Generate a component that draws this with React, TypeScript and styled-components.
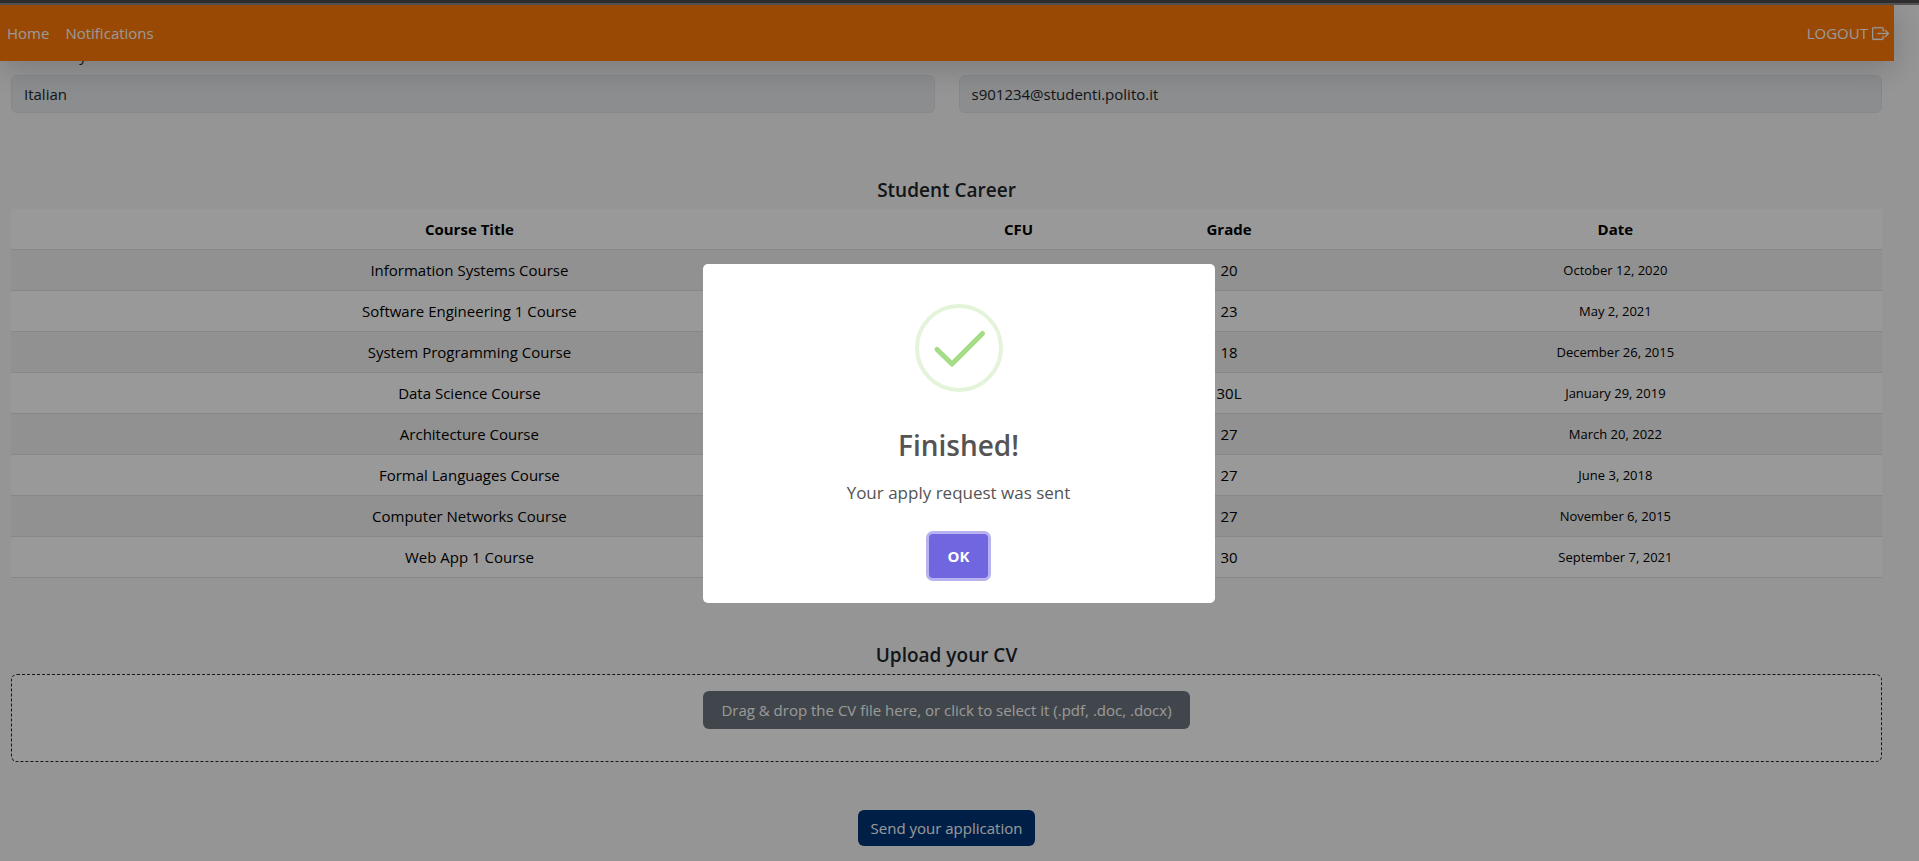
import React, { useState } from "react";
import styled, { createGlobalStyle } from "styled-components";
import { BsBoxArrowRight } from "react-icons/bs";

const GlobalStyle = createGlobalStyle`
  *, *::before, *::after { box-sizing: border-box; }
  body {
    margin: 0;
    background: #f9f9f9;
    color: #212529;
    font-family: "Open Sans", "Noto Sans", sans-serif;
    font-size: 15px;
    line-height: 24px;
  }
  button, input { font: inherit; }
`;

const TopStrip = styled.div`
  height: 5px;
  background: #4e4e4e;
  border-bottom: 2px solid #8c8c8c;
`;

const Page = styled.div`
  padding-right: 25px;
`;

const Navbar = styled.nav`
  position: sticky;
  top: 0;
  z-index: 10;
  display: flex;
  align-items: center;
  justify-content: space-between;
  height: 56px;
  padding: 0 5px 0 7px;
  background: #ff7a06;
  box-shadow: 0 8px 32px rgba(0, 0, 0, 0.18);
`;

const NavLinks = styled.div`
  display: flex;
  gap: 16px;
`;

const NavLink = styled.a`
  display: inline-flex;
  align-items: center;
  gap: 4px;
  color: #fff;
  text-decoration: none;

  svg {
    width: 17px;
    height: 17px;
    stroke: currentColor;
    stroke-width: 0.3;
  }
`;

const Main = styled.main`
  margin-top: -18px;
  padding: 0 12px 0 11px;
`;

const FieldRow = styled.div`
  display: grid;
  grid-template-columns: 1fr 1fr;
  gap: 24px;
`;

const Field = styled.div`
  display: flex;
  flex-direction: column;
  gap: 8px;
`;

const TextInput = styled.input`
  width: 100%;
  height: 38px;
  padding: 0 12px;
  border: 1px solid #dfe3e8;
  border-radius: 6px;
  background: #e9ecef;
  color: #212529;
`;

const Section = styled.section`
  display: flex;
  flex-direction: column;
  gap: 7px;
  margin-top: 65px;
`;

const SectionTitle = styled.h5`
  margin: 0;
  font-size: 19px;
  font-weight: 600;
  line-height: 24px;
  text-align: center;
`;

const CareerTable = styled.table`
  width: 100%;
  border-collapse: separate;
  border-spacing: 0;
  table-layout: fixed;
  background: #fff;
  color: #000;
  text-align: center;

  tbody tr:nth-child(odd) {
    background: #f2f2f2;
  }
`;

const HeadCell = styled.th<{ $width: number }>`
  width: ${({ $width }) => $width}%;
  height: 41px;
  padding: 0 8px;
  border-bottom: 1px solid #dee2e6;
  font-weight: 700;
`;

const Cell = styled.td`
  height: 41px;
  padding: 0 8px;
  border-bottom: 1px solid #dee2e6;
`;

const DateCell = styled(Cell)`
  font-size: 13px;
`;

const DropZone = styled.div`
  display: flex;
  align-items: flex-start;
  justify-content: center;
  min-height: 88px;
  padding: 16px;
  border: 1px dashed #212529;
  border-radius: 6px;
  background: #fff;
`;

const Button = styled.button<{ $color: string }>`
  min-height: 36px;
  padding: 6px 13px;
  border: 0;
  border-radius: 6px;
  background: ${({ $color }) => $color};
  color: #fff;
  cursor: pointer;
`;

const DropButton = styled(Button)`
  min-height: 38px;
  padding: 6px 18px;
`;

const SubmitRow = styled.div`
  display: flex;
  justify-content: center;
  padding: 48px 0 14px;
`;

const Overlay = styled.div`
  position: fixed;
  inset: 0;
  z-index: 20;
  display: flex;
  align-items: center;
  justify-content: center;
  padding: 6px 2px 0 0;
  background: rgba(0, 0, 0, 0.4);
`;

const Dialog = styled.div`
  display: flex;
  flex-direction: column;
  align-items: center;
  width: 512px;
  padding: 40px 20px 25px;
  border-radius: 5px;
  background: #fff;
  color: #545454;
`;

const DialogTitle = styled.h2`
  margin: 31px 0 12px;
  font-size: 28px;
  font-weight: 600;
  line-height: 44px;
`;

const DialogText = styled.p`
  margin: 0;
  font-size: 17px;
  line-height: 28px;
`;

const OkButton = styled.button`
  height: 44px;
  margin-top: 27px;
  padding: 0 19px;
  border: 0;
  border-radius: 4px;
  outline: none;
  background: #7066e0;
  box-shadow: 0 0 0 3px #b8b3f0;
  color: #fff;
  font-weight: 700;
  cursor: pointer;
`;

const courses = [
  { title: "Information Systems Course", grade: "20", date: "October 12, 2020" },
  { title: "Software Engineering 1 Course", grade: "23", date: "May 2, 2021" },
  { title: "System Programming Course", grade: "18", date: "December 26, 2015" },
  { title: "Data Science Course", grade: "30L", date: "January 29, 2019" },
  { title: "Architecture Course", grade: "27", date: "March 20, 2022" },
  { title: "Formal Languages Course", grade: "27", date: "June 3, 2018" },
  { title: "Computer Networks Course", grade: "27", date: "November 6, 2015" },
  { title: "Web App 1 Course", grade: "30", date: "September 7, 2021" },
];

function SuccessIcon() {
  return (
    <svg width="88" height="88" viewBox="0 0 88 88" fill="none" aria-hidden="true">
      <circle cx="44" cy="44" r="42" stroke="#e4f4da" strokeWidth="4" />
      <path
        d="M22 45.5 L37 60 L67.5 29.5"
        stroke="#a5dc86"
        strokeWidth="5"
        strokeLinecap="round"
        strokeLinejoin="round"
      />
    </svg>
  );
}

export default function App() {
  const [finished, setFinished] = useState(true);

  return (
    <>
      <GlobalStyle />
      <TopStrip />
      <Page>
        <Navbar>
          <NavLinks>
            <NavLink href="#home">Home</NavLink>
            <NavLink href="#notifications">Notifications</NavLink>
          </NavLinks>
          <NavLink href="#logout">
            LOGOUT <BsBoxArrowRight />
          </NavLink>
        </Navbar>
        <Main>
          <FieldRow>
            <Field>
              <label htmlFor="nationality">Nationality</label>
              <TextInput id="nationality" readOnly value="Italian" />
            </Field>
            <Field>
              <label htmlFor="email">Email</label>
              <TextInput id="email" readOnly value="s901234@studenti.polito.it" />
            </Field>
          </FieldRow>

          <Section>
            <SectionTitle>Student Career</SectionTitle>
            <CareerTable>
              <thead>
                <tr>
                  <HeadCell $width={49}>Course Title</HeadCell>
                  <HeadCell $width={9.7}>CFU</HeadCell>
                  <HeadCell $width={12.8}>Grade</HeadCell>
                  <HeadCell $width={28.5}>Date</HeadCell>
                </tr>
              </thead>
              <tbody>
                {courses.map((course) => (
                  <tr key={course.title}>
                    <Cell>{course.title}</Cell>
                    <Cell />
                    <Cell>{course.grade}</Cell>
                    <DateCell>{course.date}</DateCell>
                  </tr>
                ))}
              </tbody>
            </CareerTable>
          </Section>

          <Section>
            <SectionTitle>Upload your CV</SectionTitle>
            <DropZone>
              <DropButton type="button" $color="#6c757d">
                Drag &amp; drop the CV file here, or click to select it (.pdf, .doc, .docx)
              </DropButton>
            </DropZone>
          </Section>

          <SubmitRow>
            <Button type="button" $color="#003576" onClick={() => setFinished(true)}>
              Send your application
            </Button>
          </SubmitRow>
        </Main>
      </Page>

      {finished && (
        <Overlay>
          <Dialog role="dialog" aria-modal="true" aria-labelledby="dialog-title">
            <SuccessIcon />
            <DialogTitle id="dialog-title">Finished!</DialogTitle>
            <DialogText>Your apply request was sent</DialogText>
            <OkButton type="button" onClick={() => setFinished(false)}>
              OK
            </OkButton>
          </Dialog>
        </Overlay>
      )}
    </>
  );
}
